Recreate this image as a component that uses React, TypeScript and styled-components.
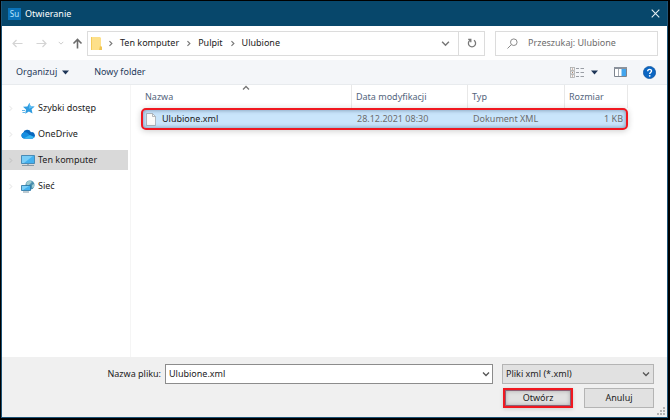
import React from "react";
import styled, { createGlobalStyle, css } from "styled-components";

const GlobalStyle = createGlobalStyle`
  * { box-sizing: border-box; }
  body { margin: 0; background: #000; }
  body, button, input, select, table {
    font-family: "Noto Sans", "Open Sans", sans-serif;
    font-size: 9px;
    line-height: 14px;
    color: #222;
  }
  button, input, select { margin: 0; padding: 0; border: 0; border-radius: 0; background: transparent; outline: 0; }
  svg { display: block; flex: none; }
`;

const Dialog = styled.main`
  min-height: 100vh;
  display: flex;
  flex-direction: column;
  border: 1px solid #000;
  border-right-width: 2px;
  border-bottom-width: 2px;
  background: #fff;
`;

const Frame = styled.div`
  flex: 1;
  display: flex;
  flex-direction: column;
  border: 1px solid #1d5478;
  border-top: 0;
`;

const TitleBar = styled.header`
  height: 25px;
  display: flex;
  align-items: center;
  gap: 4px;
  padding: 0 7px 0 6px;
  background: #07476b;
  color: #fff;
`;

const Title = styled.h1`
  flex: 1;
  margin: 0;
  font-size: 9px;
  font-weight: 400;
`;

const AppBadge = styled.span`
  width: 13px;
  height: 12px;
  background: #0b72b8;
  color: #b9e6ff;
  font-size: 8px;
  line-height: 12px;
  text-align: center;
`;

const IconButton = styled.button`
  display: flex;
  align-items: center;
  justify-content: center;
`;

const AddressRow = styled.div`
  height: 34px;
  display: flex;
  align-items: center;
  padding: 0 9px 0 4px;
`;

const History = styled.div`
  width: 81px;
  display: grid;
  grid-template-columns: 23px 25px 14px 19px;
`;

const AddressBox = styled.nav`
  flex: 1;
  height: 25px;
  display: flex;
  align-items: center;
  border: 1px solid #dcdcdc;
  padding-left: 3px;
`;

const Crumbs = styled.div`
  flex: 1;
  display: flex;
  align-items: center;
  gap: 6px;
  padding-left: 5px;
`;

const AddressButton = styled(IconButton)<{ $divided?: boolean }>`
  width: 26px;
  height: 23px;
  ${(p) => p.$divided && css`border-left: 1px solid #dcdcdc;`}
`;

const SearchBox = styled.label`
  width: 163px;
  height: 25px;
  margin-left: 10px;
  display: flex;
  align-items: center;
  gap: 10px;
  padding-left: 11px;
  border: 1px solid #dcdcdc;
`;

const SearchInput = styled.input`
  flex: 1;
  min-width: 0;
  &::placeholder { color: #6d6d6d; opacity: 1; }
`;

const Toolbar = styled.div`
  height: 25px;
  display: flex;
  align-items: center;
  padding: 0 11px 0 14px;
  background: #f4f6f9;
  border-bottom: 1px solid #e8ebee;
`;

const ToolButton = styled.button<{ $wide?: boolean }>`
  display: flex;
  align-items: center;
  gap: ${(p) => (p.$wide ? "7px" : "5px")};
  color: #25395a;
`;

const ToolGroup = styled.div<{ $end?: boolean }>`
  display: flex;
  align-items: center;
  gap: ${(p) => (p.$end ? "16px" : "25px")};
  ${(p) => p.$end && css`margin-left: auto;`}
`;

const Content = styled.div`
  flex: 1;
  display: flex;
`;

const Sidebar = styled.nav`
  width: 129px;
  padding: 13px 2px 0 0;
  display: flex;
  flex-direction: column;
  gap: 6px;
  border-right: 1px solid #f5f5f5;
`;

const SideLink = styled.a<{ $active?: boolean }>`
  height: 20px;
  display: grid;
  grid-template-columns: 19px 14px 1fr;
  align-items: center;
  color: #1c1c1c;
  text-decoration: none;
  background: ${(p) => (p.$active ? "#d9d9d9" : "transparent")};
  svg:first-child { margin-left: 5px; }
  span { margin-left: 3px; white-space: nowrap; }
`;

const FilePane = styled.section`
  flex: 1;
  padding: 0 39px 0 10px;
`;

const FileTable = styled.table`
  width: 100%;
  table-layout: fixed;
  border-collapse: separate;
  border-spacing: 0;
`;

const Col = styled.col<{ $w?: number }>`
  width: ${(p) => (p.$w ? p.$w + "px" : "auto")};
`;

const HeadCell = styled.th`
  position: relative;
  height: 23px;
  padding: 0 4px;
  border-right: 1px solid #e8e8e8;
  color: #53657d;
  font-weight: 400;
  text-align: left;
`;

const SortMark = styled.span`
  position: absolute;
  top: -1px;
  left: calc(50% - 4px);
`;

const FileRow = styled.tr`
  position: relative;
`;

const Cell = styled.td<{ $name?: boolean; $right?: boolean }>`
  height: 22px;
  padding: 0 5px;
  background: #c9e5fb;
  color: ${(p) => (p.$name ? "#1c1c1c" : "#6d6d6d")};
  text-align: ${(p) => (p.$right ? "right" : "left")};
  white-space: nowrap;
  &:first-child { border-radius: 5px 0 0 5px; }
  &:last-child { border-radius: 0 5px 5px 0; }
  &:last-child::after {
    content: "";
    position: absolute;
    inset: 0;
    border: 2px solid #f01820;
    border-radius: 5px;
    box-shadow: inset 0 0 4px rgba(40, 70, 100, 0.55), 0 1px 6px rgba(0, 0, 0, 0.2);
    pointer-events: none;
  }
`;

const FileName = styled.div`
  display: flex;
  align-items: center;
  gap: 6px;
`;

const Footer = styled.footer`
  position: relative;
  height: 60px;
  padding: 7px 13px 0 0;
  display: flex;
  flex-direction: column;
  gap: 4px;
  background: #f0f0f0;
`;

const FieldRow = styled.div`
  display: flex;
  align-items: center;
`;

const FieldLabel = styled.label`
  width: 163px;
  padding-right: 4px;
  text-align: right;
  color: #1c1c1c;
`;

const NameField = styled.div`
  flex: 1;
  height: 20px;
  display: flex;
  align-items: center;
  border: 1px solid #8c8c8c;
  background: #fff;
`;

const NameInput = styled.input`
  flex: 1;
  min-width: 0;
  padding-left: 3px;
`;

const ComboButton = styled(IconButton)`
  width: 13px;
  height: 18px;
`;

const TypeField = styled.div`
  position: relative;
  width: 152px;
  height: 20px;
  margin-left: 9px;
  border: 1px solid #b4b4b4;
  background: #e1e1e1;
`;

const TypeSelect = styled.select`
  appearance: none;
  width: 100%;
  height: 18px;
  padding-left: 3px;
`;

const SelectMark = styled.span`
  position: absolute;
  right: 3px;
  top: 5px;
  pointer-events: none;
`;

const Actions = styled.div`
  display: flex;
  justify-content: flex-end;
  gap: 11px;
`;

const ActionButton = styled.button<{ $primary?: boolean }>`
  width: 70px;
  height: 20px;
  border: 1px solid #b4b4b4;
  background: #e1e1e1;
  color: #1c1c1c;
  ${(p) => p.$primary && css`
    border: 2px solid #f01820;
    box-shadow: inset 0 0 0 1px #8d6075, inset 0 0 5px rgba(0, 0, 0, 0.35), 0 1px 4px rgba(0, 0, 0, 0.15);
  `}
`;

const Grip = styled.span`
  position: absolute;
  right: 2px;
  bottom: 2px;
`;

const Chevron = ({ dir = "right", size = 7, color = "#777" }: { dir?: "right" | "down" | "up"; size?: number; color?: string }) => {
  const d = { right: "M2.8 1.2 5.6 4 2.8 6.8", down: "M1 2.5 4 5.5 7 2.5", up: "M1 5.5 4 2.5 7 5.5" }[dir];
  return (
    <svg width={size} height={size} viewBox="0 0 8 8" fill="none" stroke={color} strokeWidth="1.3" aria-hidden="true">
      <path d={d} />
    </svg>
  );
};

const Caret = () => (
  <svg width="7" height="5" viewBox="0 0 7 5" aria-hidden="true"><path d="M0 .5h7L3.5 4.5z" fill="#1d3557" /></svg>
);

const Arrow = ({ dir }: { dir: "left" | "right" | "up" }) => (
  <svg width="11" height="11" viewBox="0 0 11 11" fill="none" stroke={dir === "up" ? "#6c6c6c" : "#d4d4d4"} strokeWidth={dir === "up" ? 1.6 : 1.2} aria-hidden="true">
    <path d={{ left: "M10.5 5.5H1M4.5 2l-3.5 3.5 3.5 3.5", right: "M.5 5.5H10M6.5 2l3.5 3.5-3.5 3.5", up: "M5.5 10.5V1.5M1.5 5.5l4-4 4 4" }[dir]} />
  </svg>
);

const FolderIcon = () => (
  <svg width="11" height="13" viewBox="0 0 11 13" aria-hidden="true">
    <path d="M0 0h9l1 1v8l1 1v3H0z" fill="#fde08a" />
    <path d="M0 0h1v13H0z" fill="#f4cb5b" />
    <path d="M9 9l2 1v3H8z" fill="#efc554" />
  </svg>
);

const RefreshIcon = () => (
  <svg width="10" height="10" viewBox="0 0 10 10" fill="none" stroke="#777" strokeWidth="1.3" aria-hidden="true">
    <path d="M7 2.3A3.6 3.6 0 1 1 3 2.3M1.2 1.4h2.6v2.8" />
  </svg>
);

const SearchIcon = () => (
  <svg width="11" height="11" viewBox="0 0 11 11" fill="none" stroke="#8a8a8a" strokeWidth="1" aria-hidden="true">
    <circle cx="6.8" cy="4.2" r="3.3" /><path d="M4.4 6.6.5 10.5" />
  </svg>
);

const ViewIcon = () => (
  <svg width="14" height="11" viewBox="0 0 14 11" fill="none" aria-hidden="true">
    <g stroke="#aaa" strokeWidth=".8">
      <rect x=".5" y=".5" width="4" height="2.8" /><rect x=".5" y="4.1" width="4" height="2.8" /><rect x=".5" y="7.7" width="4" height="2.8" />
    </g>
    <path d="M2 2h1M2 5.5h1M2 9h1" stroke="#a98268" />
    <path d="M6 1.5h3M10.5 1.5H14M6 5.5h3M10.5 5.5H14M6 9.5h3M10.5 9.5H14" stroke="#9a9ea5" />
  </svg>
);

const PaneIcon = () => (
  <svg width="13" height="10" viewBox="0 0 13 10" aria-hidden="true">
    <path d="M.5.5h12v9H.5z" fill="#fff" stroke="#7c848f" />
    <path d="M0 0h13v2H0z" fill="#8b929c" />
    <path d="M4.5 2v7" stroke="#a4aab2" /><path d="M7.5 2H12v7H7.5z" fill="#42a5ee" />
  </svg>
);

const HelpIcon = () => (
  <svg width="13" height="13" viewBox="0 0 13 13" aria-hidden="true">
    <circle cx="6.5" cy="6.5" r="6.1" fill="#0b66c3" stroke="#074d98" strokeWidth=".7" />
    <path d="M4.7 5.2c0-2.5 3.8-2.4 3.8-.2 0 1.4-1.8 1.5-1.8 2.9" fill="none" stroke="#fff" strokeWidth="1.4" />
    <circle cx="6.7" cy="9.8" r=".9" fill="#fff" />
  </svg>
);

const StarIcon = () => (
  <svg width="14" height="13" viewBox="0 0 14 13" aria-hidden="true">
    <path d="M8.4.8 9.7 4.4l3.9.2-3 2.6.9 4.3-3.6-2.1-3.7 2.4.8-4.3L2 4.8l4.4-.2z" fill="#2f9ce0" />
    <path d="M8.4.8 9.7 4.4l3.9.2-5.5 2.2z" fill="#5fc0f5" />
    <path d="M1 8.5h3M1.5 10.5H4" stroke="#62b6e9" />
  </svg>
);

const CloudIcon = () => (
  <svg width="14" height="10" viewBox="0 0 14 10" aria-hidden="true">
    <path d="M3 9.5A3 3 0 0 1 2.2 3.8 4.2 4.2 0 0 1 10 3.2a3.2 3.2 0 0 1 1.4 6.3z" fill="#0a68bd" />
    <path d="M2.2 3.8c2-1 3.2-.4 4.5.4L12 9.4c-3 .3-6 .1-9 .1A3 3 0 0 1 2.2 3.8z" fill="#168ee0" />
    <path d="M2.5 9.4 9 6l4.2 2c-.4.9-1 1.5-2 1.5z" fill="#36b6f2" />
  </svg>
);

const ComputerIcon = () => (
  <svg width="14" height="13" viewBox="0 0 14 13" aria-hidden="true">
    <path d="M.5 1.5h13v8H.5z" fill="#43b0ee" stroke="#377ca9" strokeWidth=".8" />
    <path d="M1 2h11L3 9H1z" fill="#79cdf7" />
    <path d="M6 10h2v1H6z" fill="#a4adb3" /><path d="M1 11.5h12" stroke="#8899a5" />
  </svg>
);

const NetworkIcon = () => (
  <svg width="14" height="13" viewBox="0 0 14 13" aria-hidden="true">
    <circle cx="9" cy="5" r="4.5" fill="#4a8fad" />
    <path d="M6 2q3-3 5 0L9 4 7 6 5 4zM11 5l2-1v3l-2 1z" fill="#9ecbd0" />
    <path d="M.5 5.5h9v5h-9z" fill="#42b1ef" stroke="#28729e" strokeWidth=".8" /><path d="M1 6h7L2 10H1z" fill="#79cef6" />
    <path d="M2 12h6" stroke="#7c96a5" />
  </svg>
);

const FileIcon = () => (
  <svg width="10" height="13" viewBox="0 0 10 13" aria-hidden="true">
    <path d="M.5.5h6l3 3v9h-9z" fill="#fbfbf9" stroke="#a2a9ae" strokeWidth=".8" />
    <path d="M6.5.5v3h3" fill="none" stroke="#a2a9ae" strokeWidth=".8" />
  </svg>
);

const places = [
  { label: "Szybki dostęp", icon: <StarIcon /> },
  { label: "OneDrive", icon: <CloudIcon /> },
  { label: "Ten komputer", icon: <ComputerIcon />, active: true },
  { label: "Sieć", icon: <NetworkIcon /> },
];

const crumbs = ["Ten komputer", "Pulpit", "Ulubione"];

export default function App() {
  return (
    <>
      <GlobalStyle />
      <Dialog>
        <Frame>
          <TitleBar>
            <AppBadge>Su</AppBadge>
            <Title>Otwieranie</Title>
            <IconButton aria-label="Zamknij">
              <svg width="9" height="9" viewBox="0 0 9 9" stroke="#e4edf2" strokeWidth="1.1"><path d="M.7.7l7.6 7.6M8.3.7.7 8.3" /></svg>
            </IconButton>
          </TitleBar>
          <AddressRow>
            <History>
              <IconButton aria-label="Wstecz" disabled><Arrow dir="left" /></IconButton>
              <IconButton aria-label="Dalej" disabled><Arrow dir="right" /></IconButton>
              <IconButton aria-label="Ostatnie lokalizacje" disabled><Chevron dir="down" size={6} color="#ccc" /></IconButton>
              <IconButton aria-label="W górę"><Arrow dir="up" /></IconButton>
            </History>
            <AddressBox aria-label="Adres">
              <FolderIcon />
              <Crumbs>
                {crumbs.map((name) => (
                  <React.Fragment key={name}>
                    <Chevron />
                    <button>{name}</button>
                  </React.Fragment>
                ))}
              </Crumbs>
              <AddressButton aria-label="Poprzednie lokalizacje"><Chevron dir="down" size={9} /></AddressButton>
              <AddressButton $divided aria-label="Odśwież"><RefreshIcon /></AddressButton>
            </AddressBox>
            <SearchBox>
              <SearchIcon />
              <SearchInput aria-label="Przeszukaj" placeholder="Przeszukaj: Ulubione" />
            </SearchBox>
          </AddressRow>
          <Toolbar>
            <ToolGroup>
              <ToolButton>Organizuj <Caret /></ToolButton>
              <ToolButton>Nowy folder</ToolButton>
            </ToolGroup>
            <ToolGroup $end>
              <ToolButton $wide aria-label="Zmień widok"><ViewIcon /><Caret /></ToolButton>
              <IconButton aria-label="Okienko podglądu"><PaneIcon /></IconButton>
              <IconButton aria-label="Pomoc"><HelpIcon /></IconButton>
            </ToolGroup>
          </Toolbar>
          <Content>
            <Sidebar>
              {places.map((p) => (
                <SideLink key={p.label} href="#" $active={p.active}>
                  <Chevron color={p.active ? "#c9c9c9" : "#ededed"} />
                  {p.icon}
                  <span>{p.label}</span>
                </SideLink>
              ))}
            </Sidebar>
            <FilePane>
              <FileTable>
                <colgroup>
                  <Col /><Col $w={116} /><Col $w={97} /><Col $w={63} />
                </colgroup>
                <thead>
                  <tr>
                    <HeadCell>Nazwa<SortMark><Chevron dir="up" size={8} /></SortMark></HeadCell>
                    <HeadCell>Data modyfikacji</HeadCell>
                    <HeadCell>Typ</HeadCell>
                    <HeadCell>Rozmiar</HeadCell>
                  </tr>
                </thead>
                <tbody>
                  <FileRow>
                    <Cell $name><FileName><FileIcon />Ulubione.xml</FileName></Cell>
                    <Cell>28.12.2021 08:30</Cell>
                    <Cell>Dokument XML</Cell>
                    <Cell $right>1 KB</Cell>
                  </FileRow>
                </tbody>
              </FileTable>
            </FilePane>
          </Content>
          <Footer>
            <FieldRow>
              <FieldLabel htmlFor="file-name">Nazwa pliku:</FieldLabel>
              <NameField>
                <NameInput id="file-name" defaultValue="Ulubione.xml" />
                <ComboButton aria-label="Pokaż listę"><Chevron dir="down" size={8} color="#555" /></ComboButton>
              </NameField>
              <TypeField>
                <TypeSelect aria-label="Typ pliku"><option>Pliki xml (*.xml)</option></TypeSelect>
                <SelectMark><Chevron dir="down" size={8} color="#555" /></SelectMark>
              </TypeField>
            </FieldRow>
            <Actions>
              <ActionButton $primary>Otwórz</ActionButton>
              <ActionButton>Anuluj</ActionButton>
            </Actions>
            <Grip>
              <svg width="8" height="8" viewBox="0 0 8 8" fill="#b4b4b4"><path d="M6 0h2v2H6zM6 3h2v2H6zM6 6h2v2H6zM3 3h2v2H3zM3 6h2v2H3zM0 6h2v2H0z" /></svg>
            </Grip>
          </Footer>
        </Frame>
      </Dialog>
    </>
  );
}
